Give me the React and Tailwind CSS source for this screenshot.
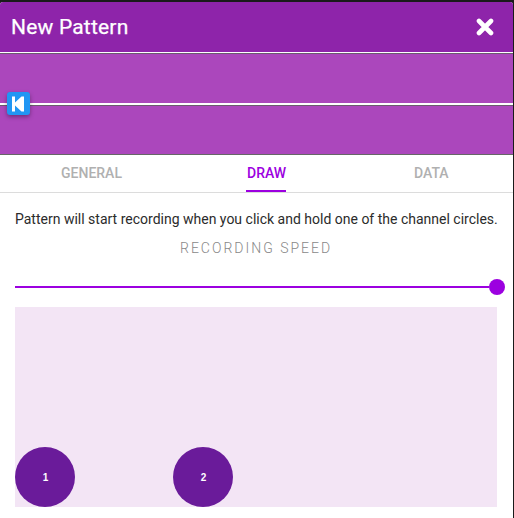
const tabs = [
  { label: 'GENERAL', className: 'ml-[61px] w-[61px] text-[#b0b0b0]' },
  { label: 'DRAW', className: 'ml-[124px] w-[40px] text-[#9c00e0]', active: true },
  { label: 'DATA', className: 'ml-[128px] w-[35px] text-[#b0b0b0]' },
];

function Header() {
  return (
    <header className="flex h-[50px] items-center justify-between rounded-t-[3px] bg-[#8e24aa] pl-[11px] pr-[19px]">
      <h1 className="whitespace-nowrap text-[21px] font-normal leading-6 tracking-[0.2px] text-white [-webkit-text-stroke:0.25px_white]">New Pattern</h1>
      <svg className="h-[18px] w-[18px]" viewBox="0 0 18 18" fill="none">
        <path d="M3 3L15 15M15 3L3 15" stroke="white" strokeWidth="4.6" strokeLinecap="round" />
      </svg>
    </header>
  );
}

function Timeline() {
  return (
    <div className="relative h-[103px] border-b border-[#666] bg-[#ab47bc]">
      <div className="h-[2px] border-b border-[#6b5a70] bg-white" />
      <div className="mt-[49px] h-[3px] border-b border-[#6b5a70] bg-white" />
      <button className="absolute left-[7px] top-[40px] flex h-[23px] w-[23px] items-center justify-center rounded-[3px] bg-[#2196f3] shadow-[0_2px_4px_rgba(0,0,0,0.35)]">
        <svg className="-ml-px h-[16px] w-[12px]" viewBox="0 0 12 16" fill="white">
          <path d="M0 0.5H3V6.5L9.5 0.5H12V15.5H9.5L3 9.5V15.5H0Z" />
        </svg>
      </button>
    </div>
  );
}

function Channel({ number }) {
  return (
    <div className="flex h-[60px] w-[60px] items-center justify-center rounded-full bg-[#6a1b9a] font-['Liberation_Sans',sans-serif] text-[10px] font-bold text-white">
      <span className="ml-px">{number}</span>
    </div>
  );
}

export default function App() {
  return (
    <div className="h-[518px] w-[514px] overflow-hidden bg-[#1a1a1a] pt-[2px] font-['Roboto',sans-serif]">
      <main className="h-[516px] w-[513px] rounded-t-[3px] bg-white">
        <Header />
        <Timeline />
        <nav className="flex h-[38px] border-b border-[#dcdcdc]">
          {tabs.map((tab) => (
            <div key={tab.label} className={`flex h-[37px] flex-col whitespace-nowrap text-[14px] font-medium leading-[36px] ${tab.className}`}>
              <span className={tab.active ? 'h-[35px] pl-px' : 'h-[35px]'}>{tab.label}</span>
              {tab.active && <span className="h-[2px] bg-[#9c00e0]" />}
            </div>
          ))}
        </nav>
        <section className="pl-[15px] pr-[16px] pt-[16px]">
          <p className="h-[20px] whitespace-nowrap text-[14px] leading-5 text-[#2b2b2b]">
            Pattern will start recording when you click and hold one of the channel circles.
          </p>
          <p className="mt-[9px] h-[20px] pl-[165px] text-[14px] font-light leading-5 tracking-[2px] text-[#888]">
            RECORDING SPEED
          </p>
          <div className="-mr-[8px] mt-[21px] flex h-[16px] items-center">
            <div className="h-[2px] flex-1 bg-[#9c00e0]" />
            <div className="h-[16px] w-[16px] rounded-full bg-[#9c00e0]" />
          </div>
          <div className="mt-[12px] flex h-[200px] items-end gap-[98px] bg-[#f3e5f5]">
            <Channel number={1} />
            <Channel number={2} />
          </div>
        </section>
      </main>
    </div>
  );
}
